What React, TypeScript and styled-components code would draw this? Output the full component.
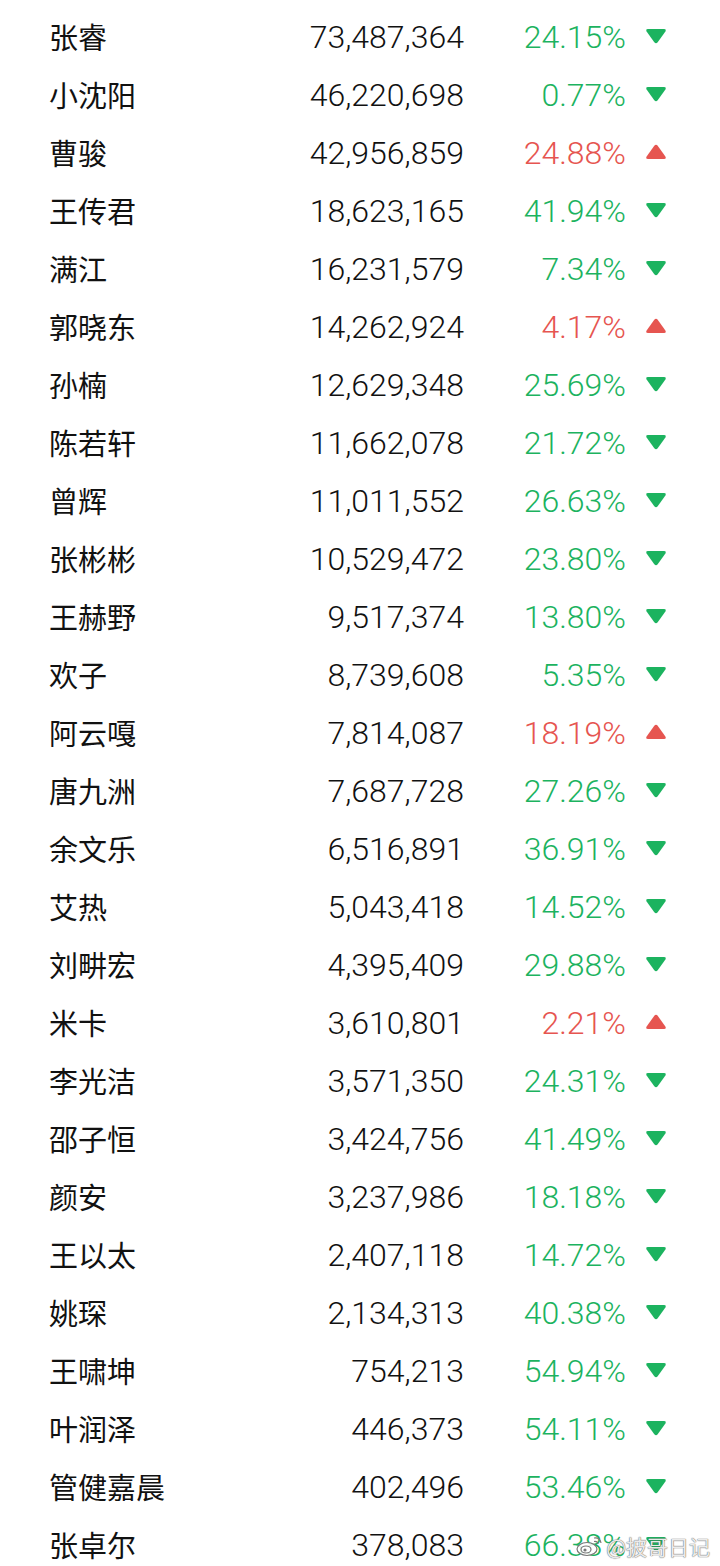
import React from "react";
import styled, { createGlobalStyle } from "styled-components";

const GlobalStyle = createGlobalStyle`
	html, body {
		margin: 0;
		padding: 0;
		background: #fff;
	}
	body {
		font-family: Roboto, "Noto Sans CJK SC", sans-serif;
	}
`;

interface Row {
	name: string;
	amount: string;
	change: string;
	up: boolean;
}

const rows: Row[] = [
	{ name: "张睿", amount: "73,487,364", change: "24.15%", up: false },
	{ name: "小沈阳", amount: "46,220,698", change: "0.77%", up: false },
	{ name: "曹骏", amount: "42,956,859", change: "24.88%", up: true },
	{ name: "王传君", amount: "18,623,165", change: "41.94%", up: false },
	{ name: "满江", amount: "16,231,579", change: "7.34%", up: false },
	{ name: "郭晓东", amount: "14,262,924", change: "4.17%", up: true },
	{ name: "孙楠", amount: "12,629,348", change: "25.69%", up: false },
	{ name: "陈若轩", amount: "11,662,078", change: "21.72%", up: false },
	{ name: "曾辉", amount: "11,011,552", change: "26.63%", up: false },
	{ name: "张彬彬", amount: "10,529,472", change: "23.80%", up: false },
	{ name: "王赫野", amount: "9,517,374", change: "13.80%", up: false },
	{ name: "欢子", amount: "8,739,608", change: "5.35%", up: false },
	{ name: "阿云嘎", amount: "7,814,087", change: "18.19%", up: true },
	{ name: "唐九洲", amount: "7,687,728", change: "27.26%", up: false },
	{ name: "余文乐", amount: "6,516,891", change: "36.91%", up: false },
	{ name: "艾热", amount: "5,043,418", change: "14.52%", up: false },
	{ name: "刘畊宏", amount: "4,395,409", change: "29.88%", up: false },
	{ name: "米卡", amount: "3,610,801", change: "2.21%", up: true },
	{ name: "李光洁", amount: "3,571,350", change: "24.31%", up: false },
	{ name: "邵子恒", amount: "3,424,756", change: "41.49%", up: false },
	{ name: "颜安", amount: "3,237,986", change: "18.18%", up: false },
	{ name: "王以太", amount: "2,407,118", change: "14.72%", up: false },
	{ name: "姚琛", amount: "2,134,313", change: "40.38%", up: false },
	{ name: "王啸坤", amount: "754,213", change: "54.94%", up: false },
	{ name: "叶润泽", amount: "446,373", change: "54.11%", up: false },
	{ name: "管健嘉晨", amount: "402,496", change: "53.46%", up: false },
	{ name: "张卓尔", amount: "378,083", change: "66.38%", up: false }
];

const GREEN = "#1cb35f";
const RED = "#e65550";

const Page = styled.div`
	position: relative;
	width: 720px;
	height: 1566px;
	overflow: hidden;
	padding-top: 8px;
	box-sizing: border-box;
`;

const List = styled.ul`
	list-style: none;
	margin: 0;
	padding: 0;
`;

const Item = styled.li`
	display: grid;
	grid-template-columns: 165px 250px 162px 40px;
	align-items: center;
	height: 58px;
	padding-left: 49px;
	font-size: 32px;
	color: #111;
`;

const Name = styled.span`
	font-family: "Noto Sans CJK SC", sans-serif;
	font-size: 29px;
	white-space: nowrap;
	margin-top: -2px;
`;

const Amount = styled.span`
	text-align: right;
	font-family: Roboto, sans-serif;
	font-weight: 300;
	margin-top: -1px;
`;

const Change = styled.span<{ $up: boolean }>`
	text-align: right;
	font-family: Roboto, sans-serif;
	font-weight: 300;
	margin-top: -1px;
	color: ${p => (p.$up ? RED : GREEN)};
`;

const Arrow = styled.svg`
	margin-left: 19px;
	display: block;
	margin-top: -2px;
`;

const Watermark = styled.div`
	position: absolute;
	right: 10px;
	bottom: 9px;
	display: flex;
	align-items: center;
	gap: 2px;
	font-family: "Noto Sans CJK SC", sans-serif;
	font-size: 21px;
	color: rgba(255, 255, 255, 0.9);
	text-shadow: 0 0 1px rgba(90, 90, 90, 0.9), 0 0 1px rgba(90, 90, 90, 0.9);
	line-height: 1;
`;

const Triangle: React.FC<{ up: boolean }> = ({ up }) => (
	<Arrow width="22" height="16" viewBox="0 0 22 16">
		{up ? (
			<path
				d="M9.3 1.8 Q11 -0.4 12.7 1.8 L20.4 12.6 Q21.6 15 19 15 L3 15 Q0.4 15 1.6 12.6 Z"
				fill={RED}
			/>
		) : (
			<path
				d="M3 1 L19 1 Q21.6 1 20.4 3.4 L12.7 14.2 Q11 16.4 9.3 14.2 L1.6 3.4 Q0.4 1 3 1 Z"
				fill={GREEN}
			/>
		)}
	</Arrow>
);

const WeiboLogo = () => (
	<svg width="28" height="22" viewBox="0 0 28 22">
		<g fill="rgba(255,255,255,0.85)" stroke="#777" strokeWidth="1.2">
			<ellipse cx="11" cy="14" rx="10" ry="6.5" />
			<ellipse cx="10" cy="14.5" rx="5" ry="3.5" />
			<circle cx="9" cy="15" r="1.6" fill="#777" stroke="none" />
			<path d="M18 3 Q24 2 25 8" fill="none" />
			<path d="M18 6.5 Q21.5 6 22 9" fill="none" />
		</g>
	</svg>
);

const App: React.FC = () => {
	return (
		<Page>
			<GlobalStyle />
			<List>
				{rows.map(row => (
					<Item key={row.name}>
						<Name>{row.name}</Name>
						<Amount>{row.amount}</Amount>
						<Change $up={row.up}>{row.change}</Change>
						<Triangle up={row.up} />
					</Item>
				))}
			</List>
			<Watermark>
				<WeiboLogo />
				<span>@披哥日记</span>
			</Watermark>
		</Page>
	);
};

export default App;
